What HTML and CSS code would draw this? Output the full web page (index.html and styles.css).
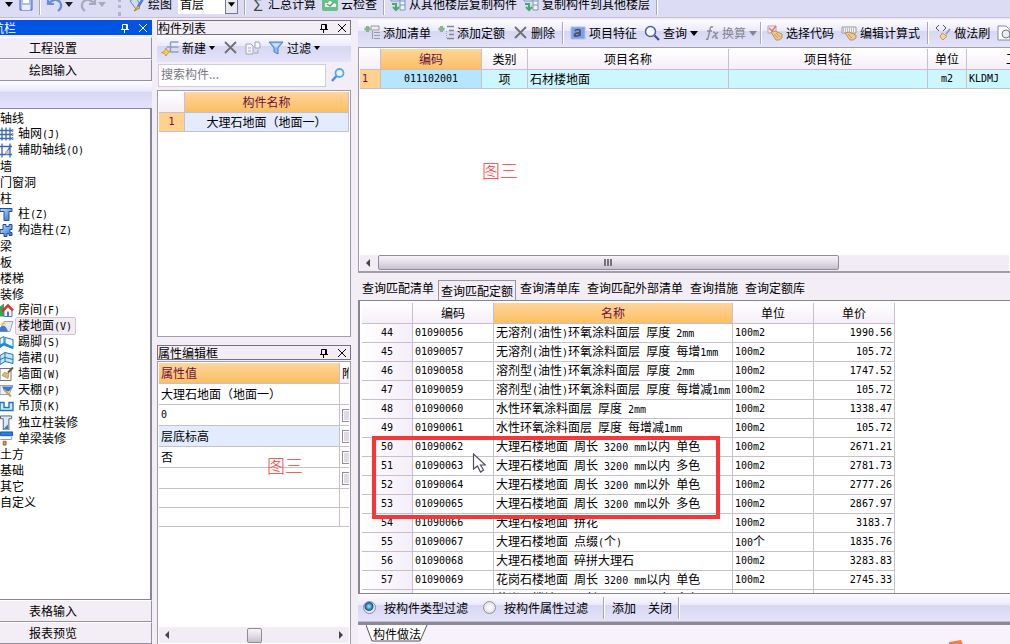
FILE: index.html
```html
<!DOCTYPE html>
<html lang="zh-CN">
<head>
<meta charset="utf-8">
<title>构件做法</title>
<link rel="stylesheet" href="styles.css">
</head>
<body>
<svg class="defs" width="0" height="0" aria-hidden="true">
  <defs>
    <linearGradient id="blue" x1="0" y1="0" x2="1" y2="1"><stop offset="0" stop-color="#bfe0ff"/><stop offset="1" stop-color="#2f6fd0"/></linearGradient>
    <symbol id="caret" viewBox="0 0 6 16"><path d="M0 6h6l-3 4z" fill="currentColor"/></symbol>
    <symbol id="bigcaret" viewBox="0 0 8 16"><path d="M0 6h8l-4 5z" fill="currentColor"/></symbol>
    <symbol id="cross" viewBox="0 0 16 16"><path d="M3 2l11 11M14 2L3 13" stroke="#707070" stroke-width="1.800" fill="none"/></symbol>
    <symbol id="close" viewBox="0 0 10 10"><path d="M1 1l8 8M9 1L1 9" stroke="currentColor" fill="none"/></symbol>
    <symbol id="pin" viewBox="0 0 10 10"><path d="M2.5 6V1.500h5V6M6.500 1v5M1 6.500h8M4.500 7v3" stroke="currentColor" fill="none"/></symbol>
    <symbol id="new" viewBox="0 0 17 16"><path d="M9 2h8M9 7h8M9 12h8M9 2v10M5 7h4" stroke="#8ba0c4" stroke-width="1.500" fill="none"/><path d="M4.500 8l1.500 3 3 .5-3 2-1.500 2.500-1.500-2.500-3-1 3-1z" fill="#ffcf40" stroke="#b98a2a" stroke-width=".7"/></symbol>
    <symbol id="copy" viewBox="0 0 16 16"><path d="M1 4h5l2 2v8H1zM10 2h4l1 2v4h-5z" fill="#f5f5fa" stroke="#a3a3b5"/><path d="M3 8h3M3 11h3M9 13h4v-3" stroke="#9ab" fill="none"/></symbol>
    <symbol id="funnel" viewBox="0 0 16 16"><path d="M1 2h14l-5 6v6l-4-2V8z" fill="#8db8f2" stroke="#4d7fc8"/><path d="M4 3.500h8l-4 4z" fill="#d5e7ff"/></symbol>
    <symbol id="lens" viewBox="0 0 16 16"><circle cx="6.500" cy="6.500" r="5" fill="#f4faff" stroke="#555a98" stroke-width="1.500"/><path d="M10.500 10.500L15 15" stroke="#4448a0" stroke-width="2.200"/></symbol>
    <symbol id="find" viewBox="0 0 16 16"><circle cx="9.500" cy="6" r="4" fill="#e9f6ff" stroke="#5aa8ea" stroke-width="1.800"/><path d="M6.500 9L2 14" stroke="#4a90dc" stroke-width="2.500"/></symbol>
    <symbol id="addlist" viewBox="0 0 16 16"><path d="M7 1h8v4H7z" fill="#eee" stroke="#999"/><path d="M10 7.500h6M10 10.500h6M10 13.500h6M8.500 6v8" stroke="#9a9aa6" fill="none"/><path d="M3.500 1v6M.5 4h6" stroke="#83b78c" stroke-width="3"/></symbol>
    <symbol id="addquota" viewBox="0 0 16 16"><path d="M9 1.500h7M11 5.500h5M11 9.500h5M9 13.500h7" stroke="#85858f" stroke-width="1.500" fill="none"/><path d="M8.500 6v8" stroke="#aaa" stroke-dasharray="1 1"/><path d="M3.500 1v6M.5 4h6" stroke="#83b78c" stroke-width="3"/></symbol>
    <symbol id="feature" viewBox="0 0 16 16"><path d="M1 2h14v12H1z" fill="#7d9fe8" stroke="#a9c1f5"/><path d="M5 6c1-2 5-2 5 0v5M10 8c-6-1-7 4-3 3q2 0 3-2" stroke="#4b4f68" stroke-width="1.700" fill="none"/></symbol>
    <symbol id="fx" viewBox="0 0 14 16"><path d="M8 2q-3-1-3 3l-2 8q0 2-2 1M2 6h5M8 7q3 0 3 6h2M13 7l-6 6" stroke="#8a8a94" stroke-width="1.400" fill="none"/></symbol>
    <symbol id="pick" viewBox="0 0 16 16"><path d="M1 1h8v7H1z" fill="#f6e9ea" stroke="#b9a6a8"/><path d="M2 3l3 3 4-5" stroke="#e07070" stroke-width="1.500" fill="none"/><path d="M4 7l4-1 7 3v4l-3 2H9z" fill="#eecb8a" stroke="#a98345" stroke-width=".8"/><path d="M7 9l4 4M9 8l4 4" stroke="#b38d50" stroke-width=".8"/></symbol>
    <symbol id="editcalc" viewBox="0 0 16 16"><path d="M1 2h14v6H1z" fill="#f2f2f2" stroke="#999"/><path d="M2 4h12M2 6h12" stroke="#888" stroke-dasharray="1 1"/><path d="M4 8l4-1 7 3v3l-3 2H9z" fill="#eecb8a" stroke="#a98345" stroke-width=".8"/><path d="M7 9l4 4" stroke="#b38d50" stroke-width=".8"/></symbol>
    <symbol id="brush" viewBox="0 0 16 16"><path d="M4 0L1 3l3 3M8 0l3 3-3 3" stroke="#555" fill="none"/><path d="M15 4l-4 5" stroke="#8f9bd0" stroke-width="2"/><path d="M7 8l5 3-4 4-3-3z" fill="#f6d68b" stroke="#b99a58"/></symbol>
    <symbol id="preview" viewBox="0 0 16 16"><path d="M1 1h8l4 4v10H1z" fill="#fff" stroke="#8a8a9a"/><circle cx="9" cy="9" r="4" fill="#e8eef8" stroke="#777"/></symbol>
    <symbol id="save" viewBox="0 0 14 14"><path d="M1 1h12v12H1z" fill="#a9bdf0" stroke="#4d62b0"/><path d="M4 1h6v5H4z" fill="#fff"/><path d="M3 8h8v5H3z" fill="#e8edff"/></symbol>
    <symbol id="undo" viewBox="0 0 18 16"><path d="M2 2v6h6M2 8q7-7 12-2 3 5-2 9" stroke="currentColor" stroke-width="2.200" fill="none"/></symbol>
    <symbol id="draw" viewBox="0 0 16 16"><path d="M1 5l6-4 4 8-4 4z" fill="#cfdcf4" stroke="#6a86bb"/><path d="M15 1l-6 10" stroke="#4f7dc6" stroke-width="2.500"/><path d="M9 10l2 2-6 3z" fill="#f4c55c" stroke="#ad8030"/></symbol>
    <symbol id="cloud" viewBox="0 0 16 16"><rect width="16" height="15" rx="2" fill="#69bf88"/><path d="M3 11q-1-5 3-4 2-4 5 0 4 0 3 4z" fill="#fff"/><path d="M5 8l3 2 4-4" stroke="#4fa870" stroke-width="1.500" fill="none"/></symbol>
    <symbol id="floorcopy" viewBox="0 0 16 16"><path d="M1 2h8v3H1zM10 1h5v13h-5zM10 5h5M10 9h5" fill="#edf2fb" stroke="#7892c5"/><path d="M2 8h4v6M3 11l3 3 3-3" stroke="#48ac66" stroke-width="2" fill="none"/></symbol>
    <symbol id="t-grid" viewBox="0 0 14 14"><path d="M0 3h13M0 7h13M0 11h13M2 0v13M6 0v13M10 0v13" stroke="#3b67b8" stroke-width="1.300"/><path d="M12 2h1v2h-1zM12 6h1v2h-1zM12 10h1v2h-1z" fill="#fff" stroke="#3b67b8" stroke-width=".7"/></symbol>
    <symbol id="t-aux" viewBox="0 0 14 14"><path d="M0 3h12M0 11h12M2 0v14M10 0v14M5 11l6-9" stroke="#3b67b8" stroke-width="1.300"/><circle cx="7" cy="9" r="2" fill="#cdb9a9"/></symbol>
    <symbol id="t-col" viewBox="0 0 14 14"><path d="M0 1h12v3H9v9H4V4H0z" fill="url(#blue)" stroke="#244b94"/></symbol>
    <symbol id="t-struct" viewBox="0 0 14 14"><path d="M3 3V1h3v2h3V1h3v5h-2v3h2v3H9v-2H7v3H4v-3H0V6h3z" fill="url(#blue)" stroke="#244b94"/></symbol>
    <symbol id="t-room" viewBox="0 0 14 14"><path d="M0 3l4-3v13H0z" fill="#36a350"/><path d="M4 7v6h8V7" fill="#f2f7ff" stroke="#4b7ac0"/><path d="M2 8l6-6 5 5" stroke="#d8352c" stroke-width="2.500" fill="none"/><path d="M7 8h2v5H7z" fill="#4878c6"/></symbol>
    <symbol id="t-floor" viewBox="0 0 14 14"><path d="M0 10L4 2h9l-3 10H0z" fill="#e9e9ed" stroke="#a1a1ad"/><path d="M0 8q5-5 8 4H0z" fill="#3e79cf"/><path d="M0 5l4-3 2 3z" fill="#e9bf72"/></symbol>
    <symbol id="t-kick" viewBox="0 0 14 14"><path d="M0 3l4-2v8l-4 3zM5 2l8 2v9l-8-3z" fill="#eef7ff" stroke="#1976c9"/><path d="M0 9l4-2 9 4v2l-9-3-4 2z" fill="#2189dc"/></symbol>
    <symbol id="t-skirt" viewBox="0 0 14 14"><path d="M0 4l5-3 8 2v9l-8-2-5 3zM5 1v9M0 8l5-2 8 2" fill="#c7e6fa" stroke="#1976b9"/></symbol>
    <symbol id="t-wall" viewBox="0 0 14 14"><path d="M0 1h11v12H0z" fill="#fff" stroke="#6e7280"/><path d="M13 0L8 5" stroke="#6d5631" stroke-width="2"/><path d="M4 5l5 1-1 5-6-3z" fill="#d8bd72" stroke="#967a36" stroke-width=".6"/></symbol>
    <symbol id="t-ceil" viewBox="0 0 14 14"><path d="M0 2h13l-4 9H0z" fill="#eef2f8" stroke="#96a3ba"/><path d="M2 3h11l-4 5-5-1z" fill="#3f79c4"/><path d="M4 6l7 7" stroke="#c69d52" stroke-width="2"/></symbol>
    <symbol id="t-hang" viewBox="0 0 14 14"><path d="M0 3h4v5h5V3h4v8H0z" fill="#d2eafb" stroke="#1976c9" stroke-width="1.400"/></symbol>
    <symbol id="t-single" viewBox="0 0 14 16"><path d="M0 1h12v3H9v12H3V4H0z" fill="#dce9f8" stroke="#505c72"/><path d="M4 14l4-4v5H4z" fill="#2980d8"/></symbol>
    <symbol id="t-beam" viewBox="0 0 14 16"><path d="M0 1h13v4H0z" fill="#2580df" stroke="#1258a7"/><path d="M0 9h12V6" stroke="#87909f" fill="none"/><path d="M3 11h3v4H3z" fill="#d69a55" stroke="#96642e"/></symbol>
  </defs>
</svg>

<header class="topbar">
  <div class="topbar-row">
    <svg class="w8"><use href="#bigcaret"/></svg>
    <button class="tool" aria-label="保存"><svg class="w14"><use href="#save"/></svg></button>
    <span class="sep"></span>
    <button class="tool undo" aria-label="撤销"><svg class="w18"><use href="#undo"/></svg><svg class="w8 dark"><use href="#bigcaret"/></svg></button>
    <button class="tool redo" aria-label="恢复"><svg class="w18 flip"><use href="#undo"/></svg><svg class="w8"><use href="#bigcaret"/></svg></button>
    <span class="grip"></span>
    <button class="tool"><svg class="w16"><use href="#draw"/></svg>绘图</button>
    <span class="floor"><select aria-label="楼层"><option>首层</option></select><svg class="w8"><use href="#bigcaret"/></svg></span>
    <span class="sep"></span>
    <button class="tool"><span class="sigma">Σ</span>汇总计算</button>
    <button class="tool"><svg class="w16"><use href="#cloud"/></svg>云检查</button>
    <span class="sep"></span>
    <button class="tool"><svg class="w16"><use href="#floorcopy"/></svg>从其他楼层复制构件</button>
    <button class="tool"><svg class="w16"><use href="#floorcopy"/></svg>复制构件到其他楼层</button>
    <span class="sep"></span>
  </div>
</header>

<main class="work">
  <nav class="nav">
    <div class="nav-title"><h2>航栏</h2><button aria-label="固定"><svg><use href="#pin"/></svg></button><button aria-label="关闭"><svg><use href="#close"/></svg></button></div>
    <button class="nav-btn">工程设置</button>
    <button class="nav-btn">绘图输入</button>
    <div class="nav-strip"></div>
    <ul class="tree">
      <li>轴线</li>
      <li class="leaf"><svg><use href="#t-grid"/></svg><span>轴网<span class="m">(J)</span></span></li>
      <li class="leaf"><svg><use href="#t-aux"/></svg><span>辅助轴线<span class="m">(O)</span></span></li>
      <li>墙</li>
      <li>门窗洞</li>
      <li>柱</li>
      <li class="leaf"><svg><use href="#t-col"/></svg><span>柱<span class="m">(Z)</span></span></li>
      <li class="leaf"><svg><use href="#t-struct"/></svg><span>构造柱<span class="m">(Z)</span></span></li>
      <li>梁</li>
      <li>板</li>
      <li>楼梯</li>
      <li>装修</li>
      <li class="leaf"><svg><use href="#t-room"/></svg><span>房间<span class="m">(F)</span></span></li>
      <li class="leaf current"><svg><use href="#t-floor"/></svg><span>楼地面<span class="m">(V)</span></span></li>
      <li class="leaf"><svg><use href="#t-kick"/></svg><span>踢脚<span class="m">(S)</span></span></li>
      <li class="leaf"><svg><use href="#t-skirt"/></svg><span>墙裙<span class="m">(U)</span></span></li>
      <li class="leaf"><svg><use href="#t-wall"/></svg><span>墙面<span class="m">(W)</span></span></li>
      <li class="leaf"><svg><use href="#t-ceil"/></svg><span>天棚<span class="m">(P)</span></span></li>
      <li class="leaf"><svg><use href="#t-hang"/></svg><span>吊顶<span class="m">(K)</span></span></li>
      <li class="leaf"><svg><use href="#t-single"/></svg><span>独立柱装修</span></li>
      <li class="leaf"><svg><use href="#t-beam"/></svg><span>单梁装修</span></li>
      <li>土方</li>
      <li>基础</li>
      <li>其它</li>
      <li>自定义</li>
    </ul>
    <button class="nav-btn">表格输入</button>
    <button class="nav-btn">报表预览</button>
  </nav>

  <div class="middle">
    <section class="list-panel">
      <div class="panel-title"><h2>构件列表</h2><button aria-label="固定"><svg><use href="#pin"/></svg></button><button aria-label="关闭"><svg><use href="#close"/></svg></button></div>
      <div class="toolbar">
        <button class="tool"><svg class="w18"><use href="#new"/></svg>新建<svg class="w6"><use href="#caret"/></svg></button>
        <button class="tool" aria-label="删除"><svg class="w16"><use href="#cross"/></svg></button>
        <button class="tool" aria-label="复制"><svg class="w16"><use href="#copy"/></svg></button>
        <button class="tool"><svg class="w16"><use href="#funnel"/></svg>过滤<svg class="w6"><use href="#caret"/></svg></button>
      </div>
      <div class="search"><input type="text" placeholder="搜索构件..." aria-label="搜索构件"><button aria-label="搜索"><svg class="w16"><use href="#find"/></svg></button></div>
      <div class="box">
        <table class="grid comp">
          <colgroup><col class="c26"><col></colgroup>
          <thead><tr><th></th><th class="hot">构件名称</th></tr></thead>
          <tbody><tr><td class="hotcell center m">1</td><td class="sel center">大理石地面（地面一）</td></tr></tbody>
        </table>
      </div>
    </section>
    <section class="prop-panel">
      <div class="panel-title"><h2>属性编辑框</h2><button aria-label="固定"><svg><use href="#pin"/></svg></button><button aria-label="关闭"><svg><use href="#close"/></svg></button></div>
      <div class="box prop-box">
        <table class="grid prop">
          <colgroup><col><col class="c9"></colgroup>
          <thead><tr><th class="hot left">属性值</th><th class="left">附</th></tr></thead>
          <tbody>
            <tr><td>大理石地面（地面一）</td><td></td></tr>
            <tr><td class="m">0</td><td><input type="checkbox" aria-label="附加"></td></tr>
            <tr><td class="sel">层底标高</td><td><input type="checkbox" aria-label="附加"></td></tr>
            <tr><td>否</td><td><input type="checkbox" aria-label="附加"></td></tr>
            <tr><td></td><td><input type="checkbox" aria-label="附加"></td></tr>
            <tr class="low"><td></td><td></td></tr>
            <tr class="low"><td></td><td></td></tr>
          </tbody>
        </table>
        <p class="note note-b">图三</p>
        <div class="hscroll"><span class="tri l"></span><span class="thumb small"></span><span class="tri r"></span></div>
      </div>
    </section>
  </div>

  <div class="right">
    <div class="toolbar">
      <button class="tool"><svg class="w16"><use href="#addlist"/></svg>添加清单</button>
      <button class="tool"><svg class="w16"><use href="#addquota"/></svg>添加定额</button>
      <button class="tool"><svg class="w16"><use href="#cross"/></svg>删除</button>
      <span class="sep"></span>
      <button class="tool"><svg class="w16"><use href="#feature"/></svg>项目特征</button>
      <button class="tool"><svg class="w16"><use href="#lens"/></svg>查询<svg class="w8"><use href="#bigcaret"/></svg></button>
      <button class="tool" disabled><svg class="w14"><use href="#fx"/></svg>换算<svg class="w8"><use href="#bigcaret"/></svg></button>
      <span class="sep tight"></span>
      <button class="tool"><svg class="w16"><use href="#pick"/></svg>选择代码</button>
      <button class="tool"><svg class="w16"><use href="#editcalc"/></svg>编辑计算式</button>
      <span class="sep"></span>
      <button class="tool"><svg class="w16"><use href="#brush"/></svg>做法刷</button>
      <button class="tool" aria-label="预览"><svg class="w16"><use href="#preview"/></svg></button>
    </div>
    <section class="box items">
      <table class="grid item-grid">
        <colgroup><col class="c21"><col class="c101"><col class="c46"><col class="c201"><col class="c199"><col class="c39"><col class="c151"></colgroup>
        <thead><tr><th></th><th class="hot">编码</th><th>类别</th><th>项目名称</th><th>项目特征</th><th>单位</th><th>工程量表达式</th></tr></thead>
        <tbody><tr class="aqua"><td class="hotcell m">1</td><td class="code center m">011102001</td><td class="center">项</td><td>石材楼地面</td><td></td><td class="center m">m2</td><td class="m">KLDMJ</td></tr></tbody>
      </table>
      <p class="note note-a">图三</p>
      <div class="hscroll"><span class="tri l"></span><span class="thumb long"></span></div>
    </section>
    <div class="tabs">
      <button>查询匹配清单</button><button class="active">查询匹配定额</button><button>查询清单库</button><button>查询匹配外部清单</button><button>查询措施</button><button>查询定额库</button>
    </div>
    <section class="quota">
      <table class="grid quota-grid">
        <colgroup><col class="c51"><col class="c81"><col class="c239"><col class="c81"><col class="c81"></colgroup>
        <thead><tr><th></th><th>编码</th><th class="hot">名称</th><th>单位</th><th>单价</th></tr></thead>
        <tbody>
          <tr><td>44</td><td>01090056</td><td>无溶剂<span class="m">(</span>油性<span class="m">)</span>环氧涂料面层<span class="m"> </span>厚度<span class="m"> 2mm</span></td><td>100m2</td><td>1990.56</td></tr>
          <tr><td>45</td><td>01090057</td><td>无溶剂<span class="m">(</span>油性<span class="m">)</span>环氧涂料面层<span class="m"> </span>厚度<span class="m"> </span>每增<span class="m">1mm</span></td><td>100m2</td><td>105.72</td></tr>
          <tr><td>46</td><td>01090058</td><td>溶剂型<span class="m">(</span>油性<span class="m">)</span>环氧涂料面层<span class="m"> </span>厚度<span class="m"> 2mm</span></td><td>100m2</td><td>1747.52</td></tr>
          <tr><td>47</td><td>01090059</td><td>溶剂型<span class="m">(</span>油性<span class="m">)</span>环氧涂料面层<span class="m"> </span>厚度<span class="m"> </span>每增减<span class="m">1mm</span></td><td>100m2</td><td>105.72</td></tr>
          <tr><td>48</td><td>01090060</td><td>水性环氧涂料面层<span class="m"> </span>厚度<span class="m"> 2mm</span></td><td>100m2</td><td>1338.47</td></tr>
          <tr><td>49</td><td>01090061</td><td>水性环氧涂料面层<span class="m"> </span>厚度<span class="m"> </span>每增减<span class="m">1mm</span></td><td>100m2</td><td>105.72</td></tr>
          <tr><td>50</td><td>01090062</td><td>大理石楼地面<span class="m"> </span>周长<span class="m"> 3200 mm</span>以内<span class="m"> </span>单色</td><td>100m2</td><td>2671.21</td></tr>
          <tr><td>51</td><td>01090063</td><td>大理石楼地面<span class="m"> </span>周长<span class="m"> 3200 mm</span>以内<span class="m"> </span>多色</td><td>100m2</td><td>2781.73</td></tr>
          <tr><td>52</td><td>01090064</td><td>大理石楼地面<span class="m"> </span>周长<span class="m"> 3200 mm</span>以外<span class="m"> </span>单色</td><td>100m2</td><td>2777.26</td></tr>
          <tr><td>53</td><td>01090065</td><td>大理石楼地面<span class="m"> </span>周长<span class="m"> 3200 mm</span>以外<span class="m"> </span>多色</td><td>100m2</td><td>2867.97</td></tr>
          <tr><td>54</td><td>01090066</td><td>大理石楼地面<span class="m"> </span>拼花</td><td>100m2</td><td>3183.7</td></tr>
          <tr><td>55</td><td>01090067</td><td>大理石楼地面<span class="m"> </span>点缀<span class="m">(</span>个<span class="m">)</span></td><td>100<span class="cn">个</span></td><td>1835.76</td></tr>
          <tr><td>56</td><td>01090068</td><td>大理石楼地面<span class="m"> </span>碎拼大理石</td><td>100m2</td><td>3283.83</td></tr>
          <tr><td>57</td><td>01090069</td><td>花岗石楼地面<span class="m"> </span>周长<span class="m"> 3200 mm</span>以内<span class="m"> </span>单色</td><td>100m2</td><td>2745.33</td></tr>
          <tr><td></td><td></td><td>花岗石楼地面<span class="m"> </span>周长<span class="m"> 3200 mm</span>以内<span class="m"> </span>多色</td><td></td><td></td></tr>
        </tbody>
      </table>
      <div class="mark"></div>
      <svg class="cursor" viewBox="0 0 13 20"><path d="M1 1v15l4-3 3 6 3-2-3-5h5z" fill="#fff" stroke="#4c4c60" stroke-width="1.200"/></svg>
    </section>
    <div class="toolbar filter">
      <label><input type="radio" name="filter" checked>按构件类型过滤</label>
      <label><input type="radio" name="filter">按构件属性过滤</label>
      <span class="sep"></span>
      <button class="tool">添加</button>
      <button class="tool">关闭</button>
      <span class="sep"></span>
    </div>
    <footer class="bottom">
      <button class="sheet"><svg viewBox="0 0 62 17"><path d="M0 0l6 16h48l7-16" fill="#fff" stroke="#555"/></svg><span>构件做法</span></button>
      <svg class="spark" viewBox="0 0 16 4"><path d="M1 2l12-2 2 4H1z" fill="#ff7a45"/></svg>
    </footer>
  </div>
</main>
</body>
</html>
```
FILE: styles.css
```css
* { box-sizing: border-box; }
html, body { height: 100%; }
body {
  margin: 0;
  display: flex;
  flex-direction: column;
  overflow: hidden;
  background: #f3edf6;
  color: #000;
  font: 12px/16px "Noto Sans CJK SC", sans-serif;
}
button, input, select { font: inherit; color: inherit; margin: 0; }
button { padding: 0; border: 0; background: none; white-space: nowrap; }
h2, p, ul { margin: 0; padding: 0; font-size: 12px; font-weight: 400; }
svg { display: block; flex: none; }
.defs { position: absolute; }
.m { font-family: "DejaVu Sans Mono", monospace; font-size: 10px; white-space: pre; }
.cn { font-family: "Noto Sans CJK SC", sans-serif; font-size: 12px; }
.w6 { width: 6px; height: 16px; }
.w8 { width: 8px; height: 16px; }
.w14 { width: 14px; height: 16px; }
.w16 { width: 16px; height: 16px; }
.w18 { width: 18px; height: 16px; }
.flip { transform: scaleX(-1); }

/* Top toolbar, scrolled partly out of the window */
.topbar { height: 18px; flex: none; overflow: hidden; background: #dcdcf5; border-bottom: 1px solid #c3bdd2; }
.topbar-row { display: flex; align-items: center; gap: 6px; height: 24px; margin-top: -8px; padding-left: 5px; }
.topbar .undo, .topbar .redo { gap: 1px; }
.undo { color: #6b8bd8; }
.redo { color: #a9a9bb; }
.dark { color: #222; }
.grip { height: 24px; margin: 0 2px 0 6px; border-left: 3px dotted #b5b1cf; }
.floor { position: relative; width: 60px; height: 20px; }
.floor select { appearance: none; width: 60px; height: 20px; padding: 0 2px; border: 0; border-radius: 0; background: #fff; }
.floor svg { position: absolute; right: 0; top: 0; width: 13px; height: 20px; padding: 2px; background: #e8e8ee; border: 1px solid #77778a; pointer-events: none; }
.sigma { width: 14px; font-size: 16px; text-align: center; color: #444; }

.work { flex: 1; min-height: 0; display: flex; padding-top: 2px; }
.tool { display: flex; align-items: center; gap: 3px; }
.tool:disabled { color: #85858f; }
.sep { width: 1px; height: 22px; background: #aaa6be; box-shadow: 1px 0 #fff; flex: none; }
.toolbar {
  display: flex;
  align-items: center;
  gap: 7px;
  height: 27px;
  flex: none;
  padding: 0 0 2px 6px;
  overflow: hidden;
  background: linear-gradient(#fdfcff, #ebe9fa 40%, #d7d7f3 42%, #e4e3fa);
}
.toolbar .tight { margin: 0 -1px 0 -4px; }

/* Navigation column */
.nav { width: 152px; flex: none; display: flex; flex-direction: column; }
.nav-title { display: flex; align-items: center; gap: 8px; height: 15px; padding-right: 4px; background: #0054e3; color: #fff; overflow: hidden; }
.nav-title h2 { flex: 1; margin-left: -8px; }
.nav-title svg, .panel-title svg { width: 10px; height: 10px; }
.nav-btn {
  height: 22px;
  flex: none;
  padding-left: 29px;
  text-align: left;
  border-top: 1px solid #fff;
  border-right: 1px solid #9590a4;
  border-bottom: 1px solid #9590a4;
}
.nav-title + .nav-btn { margin-top: 2px; }
.nav-strip { height: 27px; flex: none; background: linear-gradient(#fdfcff, #ebe9fa 38%, #d7d7f3 40%, #e4e3fa); }
.tree {
  flex: 1;
  min-height: 0;
  overflow: hidden;
  list-style: none;
  padding-top: 1px;
  background: #fff;
  border: 1px solid #88849a;
  border-width: 1px 2px 1px 0;
}
.tree li { height: 16px; }
.leaf { display: flex; align-items: center; gap: 1px; }
.leaf svg { width: 14px; height: 15px; }
.leaf > span { padding: 0 3px 0 2px; line-height: 14px; border: 1px solid transparent; }
.current > span { background: #f2ebf3; border-color: #d0c6d2; border-radius: 2px; }

/* Component list and properties */
.middle { width: 194px; flex: none; margin: 0 7px 0 5px; display: flex; flex-direction: column; gap: 8px; }
.list-panel { flex: 317 1 0; display: flex; flex-direction: column; min-height: 0; }
.list-panel .toolbar { padding-left: 4px; }
.prop-panel { flex: 299 1 0; display: flex; flex-direction: column; min-height: 0; }
.panel-title { display: flex; align-items: center; gap: 8px; height: 15px; flex: none; padding-right: 3px; border: 1px solid #77727f; }
.panel-title h2 { flex: 1; line-height: 13px; }
.search { display: flex; align-items: center; gap: 4px; height: 26px; flex: none; padding-left: 1px; }
.search input { width: 168px; height: 23px; padding: 0 2px 3px; border: 1px solid #d3cbdc; background: #fff; }
.search input::placeholder { color: #77777f; opacity: 1; }
.box { position: relative; background: #fff; border: 1px solid #a19cab; overflow: hidden; }
.list-panel .box { flex: 1; margin-top: 2px; padding: 1px; }
.prop-box { flex: 1; margin-top: 1px; padding: 1px; border-bottom: 0; }

/* Data grids */
.grid { width: 100%; table-layout: fixed; border-collapse: separate; border-spacing: 0; }
.grid th, .grid td { height: 19px; padding: 0 2px; line-height: 16px; border-right: 1px solid #c5c0c9; border-bottom: 1px solid #c5c0c9; white-space: pre; overflow: hidden; text-align: left; }
.grid th { height: 21px; font-weight: 400; text-align: center; background: linear-gradient(#fff, #f5eef8); }
.grid th.hot { color: #6c1040; background: linear-gradient(#ffd59b, #fbbf62); }
.grid .left { text-align: left; }
.grid .center { text-align: center; }
.grid .sel { background: #e3ecff; }
.grid .hotcell { background: #ffd18d; color: #6c1040; }
.aqua td { background: #cdf7ff; }
.aqua .code { background: #b5e6ff; }
.prop tbody td { height: 21px; }
.prop .low td { height: 19px; }
.prop td:last-child { padding: 0 0 0 2px; border-right: 0; }
.prop th:last-child { border-right: 0; }
.prop input { appearance: none; display: block; width: 12px; height: 13px; border: 1px solid #8f8c9b; background: #ddd9e5; box-shadow: inset 0 0 0 1px #fff; }
.c9 { width: 9px; }
.c21 { width: 21px; }
.c26 { width: 26px; }
.c39 { width: 39px; }
.c46 { width: 46px; }
.c51 { width: 51px; }
.c81 { width: 81px; }
.c101 { width: 101px; }
.c151 { width: 151px; }
.c199 { width: 199px; }
.c201 { width: 201px; }
.c239 { width: 239px; }

.hscroll { position: absolute; left: 1px; right: 1px; bottom: 1px; height: 16px; display: flex; align-items: center; background: #f2ecf4; }
.prop-box .hscroll { justify-content: space-between; padding: 0 6px; }
.tri { border: 4px solid transparent; }
.tri.l { border-right-color: #444; border-left-width: 0; }
.tri.r { border-left-color: #444; border-right-width: 0; }
.thumb { height: 15px; border: 1px solid #8f8b98; border-radius: 2px; background: linear-gradient(#f7f3f9, #e2dde7 50%, #c7c1cd); }
.thumb.small { width: 15px; }
.thumb.long { width: 71%; margin-left: 8px; }
.thumb.long::after { content: ""; display: block; width: 8px; height: 7px; margin: 3px auto; background: repeating-linear-gradient(90deg, #77727f 0 2px, transparent 2px 3px); }
.items .hscroll { bottom: 0; }
.items .hscroll .tri { margin-left: 6px; }

/* Right column */
.right { flex: 1; min-width: 0; display: flex; flex-direction: column; }
.items { flex: 225 1 0; padding: 1px; border-right: 0; border-bottom-width: 2px; }
.item-grid { width: 758px; }
.tabs { display: flex; align-items: flex-end; gap: 1px; height: 27px; flex: none; padding-left: 1px; }
.tabs button { height: 20px; padding: 0 2px 5px; border: 1px solid transparent; border-bottom: 0; line-height: 14px; }
.tabs .active { border-color: #9a95a3; padding: 1px 2px 0; }
.quota { position: relative; flex: 296 1 0; min-height: 0; overflow: hidden; padding: 2px 0 0 2px; background: #fff; border: 1px solid #88849a; border-width: 1px 0 1px 2px; }
.quota-grid { width: 533px; }
.quota-grid td { font-family: "DejaVu Sans Mono", monospace; font-size: 10px; }
.quota-grid td:nth-child(1) { text-align: center; background: linear-gradient(90deg, #fff, #f5eef8); }
.quota-grid td:nth-child(3) { font-family: "Noto Sans CJK SC", sans-serif; font-size: 12px; }
.quota-grid td:nth-child(5) { text-align: right; }
.filter { height: 28px; gap: 12px; padding: 0 0 0 5px; border-bottom: 1px solid #c3bdd2; }
.filter label { display: flex; align-items: center; gap: 8px; margin-right: 3px; white-space: nowrap; }
.filter .sep + .tool { margin-left: -4px; }
.filter .sep:last-child { margin-left: -6px; }
.filter input { appearance: none; width: 13px; height: 13px; border: 1px solid #8d8d98; border-radius: 50%; background: radial-gradient(#fff, #d8d8dd); }
.filter input:checked { background: radial-gradient(circle at 45% 40%, #7fd0f5 0 1px, #12568c 4px, #e8e8ee 5px); }
.bottom { display: flex; justify-content: space-between; align-items: flex-end; height: 22px; flex: none; padding: 0 46px 0 8px; border-top: 3px solid #8d8898; background: #f8f3fa; }
.sheet { position: relative; align-self: flex-start; width: 62px; height: 17px; }
.sheet svg { position: absolute; left: 0; top: 0; width: 62px; height: 17px; }
.sheet span { position: relative; }
.spark { width: 16px; height: 4px; }

/* Annotations over the grids */
.note { position: absolute; color: #f33; font-size: 18px; font-weight: 300; line-height: 24px; }
.note-a { left: 123px; top: 110px; }
.note-b { left: 109px; top: 91px; }
.mark { position: absolute; left: 12px; top: 135px; width: 348px; height: 83px; border: 4px solid #f93636; }
.cursor { position: absolute; left: 112px; top: 152px; width: 14px; height: 20px; }
```
